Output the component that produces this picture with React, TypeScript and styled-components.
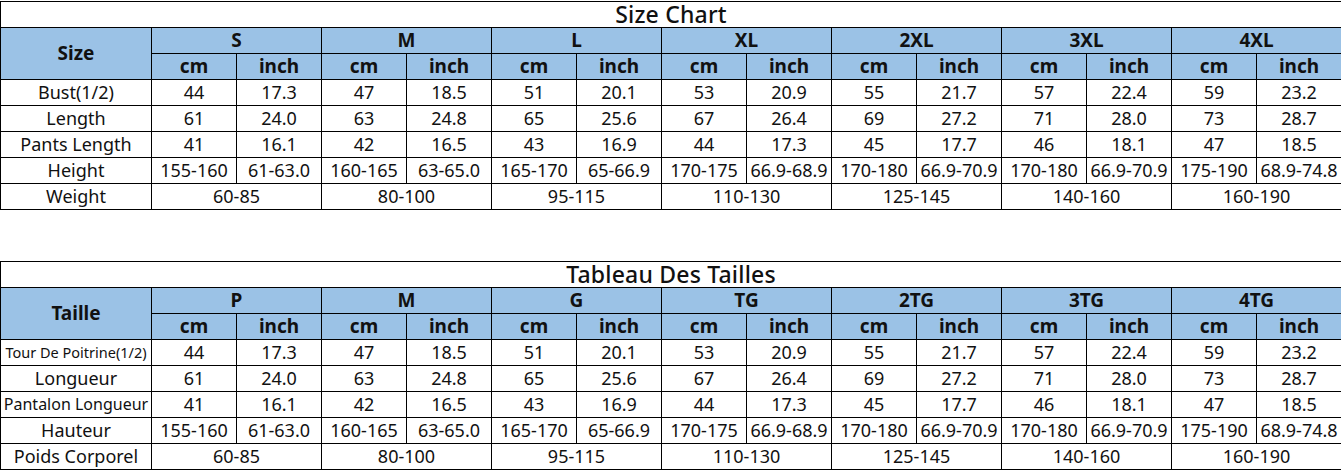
import React from "react";
import styled, { createGlobalStyle } from "styled-components";

const Global = createGlobalStyle`
  html, body { margin: 0; padding: 0; background: #fff; }
  body { font-family: "Noto Sans", "Open Sans", sans-serif; color: #111; }
`;

const Page = styled.div`
  width: 1341px;
  padding-top: 1px;
  display: flex;
  flex-direction: column;
  gap: 51px;
`;

const Table = styled.table`
  border-collapse: collapse;
  table-layout: fixed;
  width: 1341px;
`;

const Row = styled.tr`
  height: 26px;
`;

const TitleCell = styled.td`
  border: 1px solid #000;
  background: #fff;
  text-align: center;
  font-size: 23px;
  font-weight: 500;
  letter-spacing: 0.2px;
  line-height: 25px;
  height: 25px;
  padding: 0;
  white-space: nowrap;
`;

const HeadCell = styled.th`
  border: 1px solid #000;
  background: #9bc2e6;
  font-size: 19px;
  font-weight: 700;
  text-align: center;
  padding: 0;
  line-height: 25px;
  height: 25px;
  white-space: nowrap;
`;

const DataCell = styled.td<{ $size?: number }>`
  border: 1px solid #000;
  background: #fff;
  font-size: ${(p) => p.$size ?? 18}px;
  text-align: center;
  padding: 0;
  line-height: 25px;
  height: 25px;
  white-space: nowrap;
`;

type Pair = [string, string];

const bust: Pair[] = [
  ["44", "17.3"], ["47", "18.5"], ["51", "20.1"], ["53", "20.9"],
  ["55", "21.7"], ["57", "22.4"], ["59", "23.2"],
];
const length: Pair[] = [
  ["61", "24.0"], ["63", "24.8"], ["65", "25.6"], ["67", "26.4"],
  ["69", "27.2"], ["71", "28.0"], ["73", "28.7"],
];
const pants: Pair[] = [
  ["41", "16.1"], ["42", "16.5"], ["43", "16.9"], ["44", "17.3"],
  ["45", "17.7"], ["46", "18.1"], ["47", "18.5"],
];
const height: Pair[] = [
  ["155-160", "61-63.0"], ["160-165", "63-65.0"], ["165-170", "65-66.9"],
  ["170-175", "66.9-68.9"], ["170-180", "66.9-70.9"], ["170-180", "66.9-70.9"],
  ["175-190", "68.9-74.8"],
];
const weight = ["60-85", "80-100", "95-115", "110-130", "125-145", "140-160", "160-190"];

type Labels = {
  title: string;
  size: string;
  sizes: string[];
  rows: { label: string; size?: number }[];
};

const english: Labels = {
  title: "Size Chart",
  size: "Size",
  sizes: ["S", "M", "L", "XL", "2XL", "3XL", "4XL"],
  rows: [
    { label: "Bust(1/2)" },
    { label: "Length" },
    { label: "Pants Length" },
    { label: "Height" },
    { label: "Weight" },
  ],
};

const french: Labels = {
  title: "Tableau Des Tailles",
  size: "Taille",
  sizes: ["P", "M", "G", "TG", "2TG", "3TG", "4TG"],
  rows: [
    { label: "Tour De Poitrine(1/2)", size: 14.5 },
    { label: "Longueur" },
    { label: "Pantalon Longueur", size: 16 },
    { label: "Hauteur" },
    { label: "Poids Corporel" },
  ],
};

const pairRows = [bust, length, pants, height];

function Chart({ labels }: { labels: Labels }) {
  return (
    <Table>
      <colgroup>
        <col style={{ width: 151 }} />
        {Array.from({ length: 14 }).map((_, i) => (
          <col key={i} style={{ width: 85 }} />
        ))}
      </colgroup>
      <tbody>
        <Row>
          <TitleCell colSpan={15}>{labels.title}</TitleCell>
        </Row>
        <Row>
          <HeadCell rowSpan={2}>{labels.size}</HeadCell>
          {labels.sizes.map((s) => (
            <HeadCell key={s} colSpan={2}>{s}</HeadCell>
          ))}
        </Row>
        <Row>
          {labels.sizes.map((s) => (
            <React.Fragment key={s}>
              <HeadCell>cm</HeadCell>
              <HeadCell>inch</HeadCell>
            </React.Fragment>
          ))}
        </Row>
        {pairRows.map((data, r) => (
          <Row key={r}>
            <DataCell $size={labels.rows[r].size}>{labels.rows[r].label}</DataCell>
            {data.map(([cm, inch], i) => (
              <React.Fragment key={i}>
                <DataCell>{cm}</DataCell>
                <DataCell>{inch}</DataCell>
              </React.Fragment>
            ))}
          </Row>
        ))}
        <Row>
          <DataCell $size={labels.rows[4].size}>{labels.rows[4].label}</DataCell>
          {weight.map((w, i) => (
            <DataCell key={i} colSpan={2}>{w}</DataCell>
          ))}
        </Row>
      </tbody>
    </Table>
  );
}

export default function App() {
  return (
    <Page>
      <Global />
      <Chart labels={english} />
      <Chart labels={french} />
    </Page>
  );
}
